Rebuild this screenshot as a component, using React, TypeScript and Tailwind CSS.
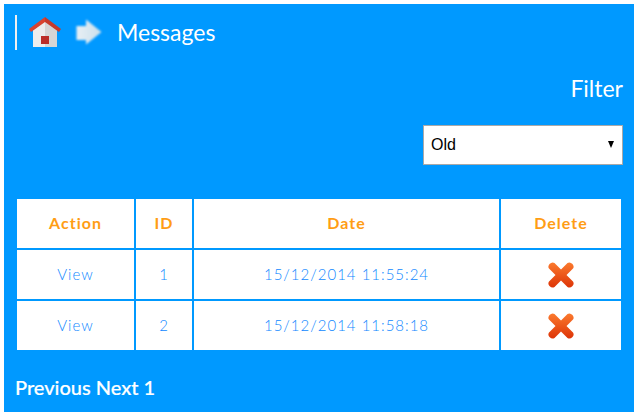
const rows = [
  { id: 1, date: "15/12/2014 11:55:24" },
  { id: 2, date: "15/12/2014 11:58:18" },
];

function HomeIcon() {
  return (
    <svg width="32" height="30" viewBox="0 0 32 30">
      <path d="M4 13 L16 4 L16 30 H4 Z" fill="#ededed" />
      <path d="M16 4 L28 13 V30 H16 Z" fill="#d5d5d5" />
      <path d="M0 12 L16 0 L16 5 L2 15 Z" fill="#d8432f" />
      <path d="M16 0 L32 12 L30 15 L16 5 Z" fill="#c63a2b" />
      <rect x="12" y="19" width="8" height="8" fill="#bb2d28" />
    </svg>
  );
}

function ArrowIcon() {
  return (
    <svg width="26" height="26" viewBox="0 0 26 26" className="blur-[0.8px]">
      <defs>
        <linearGradient id="arrowFill" x1="0" x2="1" y1="0" y2="0">
          <stop offset="0" stopColor="#e8eff4" />
          <stop offset="1" stopColor="#c9dfec" />
        </linearGradient>
      </defs>
      <path d="M0.5 7 H10 V0.5 L25.5 13 L10 25.5 V21 H0.5 Z" fill="url(#arrowFill)" />
    </svg>
  );
}

function DeleteIcon() {
  return (
    <svg width="26" height="26" viewBox="0 0 26 26">
      <defs>
        <linearGradient id="crossFill" x1="0" x2="0" y1="0" y2="1">
          <stop offset="0" stopColor="#fb7a2e" />
          <stop offset="1" stopColor="#dd3407" />
        </linearGradient>
      </defs>
      <path
        d="M1.5 2 Q4 -0.5 6.5 1 L13 7.5 L19.5 1 Q22 -0.5 24.5 2 Q26.5 4.5 25 6.5 L18.5 13 L25 19.5 Q26.5 22 24.5 24 Q22 26.5 19.5 25 L13 18.5 L6.5 25 Q4 26.5 1.5 24 Q-0.5 22 1 19.5 L7.5 13 L1 6.5 Q-0.5 4.5 1.5 2 Z"
        fill="url(#crossFill)"
      />
    </svg>
  );
}

export default function App() {
  return (
    <main className="h-[418px] w-[638px] bg-white p-1 font-['Lato',sans-serif]">
      <div className="flex h-[408px] w-[630px] flex-col bg-[#0099ff] text-white">
        <header className="flex h-[46px] items-end pl-[11px]">
          <div className="h-[35px] w-[2px] bg-[#f0f0f0]" />
          <div className="mb-[3px] ml-3 flex items-center">
            <HomeIcon />
            <div className="ml-[15px]">
              <ArrowIcon />
            </div>
            <h1 className="ml-[15px] text-[23px] leading-[30px]">Messages</h1>
          </div>
        </header>

        <div className="mt-[22px] flex flex-col items-end pr-[11px]">
          <span className="text-[23px] leading-8">Filter</span>
          <div className="relative mt-[21px] flex h-10 w-[200px] items-center border border-[#a9a9a9] bg-white pl-[7px] font-['Liberation_Sans',sans-serif] text-base text-black">
            Old
            <span className="absolute right-[8px] top-[15px] h-0 w-0 border-x-[3.5px] border-t-[7px] border-x-transparent border-t-black" />
          </div>
        </div>

        <table className="ml-[13px] mt-[34px] w-[604px] table-fixed border-collapse bg-white text-center text-[15px] font-light tracking-[1px] text-[#0f88ff]">
          <thead>
            <tr className="h-[50px] text-[16px] font-bold text-[#ff9d14]">
              <th className="w-[118px] border-r-2 border-b-2 border-[#0099ff] pb-[2px]">Action</th>
              <th className="w-[58px] border-x-2 border-b-2 border-[#0099ff] pb-[2px]">ID</th>
              <th className="w-[307px] border-x-2 border-b-2 border-[#0099ff] pb-[2px]">Date</th>
              <th className="border-l-2 border-b-2 border-[#0099ff] pb-[2px]">Delete</th>
            </tr>
          </thead>
          <tbody>
            {rows.map((row, index) => (
              <tr key={row.id} className={index === 0 ? "h-[51px]" : "h-[50px]"}>
                <td className={`border-r-2 border-[#0099ff] ${index === 0 ? "border-b-2" : ""}`}>View</td>
                <td className={`border-x-2 border-[#0099ff] ${index === 0 ? "border-b-2" : ""}`}>{row.id}</td>
                <td className={`border-x-2 border-[#0099ff] ${index === 0 ? "border-b-2" : ""}`}>{row.date}</td>
                <td className={`border-l-2 border-[#0099ff] ${index === 0 ? "border-b-2" : ""}`}>
                  <div className="flex justify-center">
                    <DeleteIcon />
                  </div>
                </td>
              </tr>
            ))}
          </tbody>
        </table>

        <footer className="ml-[11px] mt-[25px] text-xl font-medium leading-6 [-webkit-text-stroke:0.2px_white]">Previous Next 1</footer>
      </div>
    </main>
  );
}
